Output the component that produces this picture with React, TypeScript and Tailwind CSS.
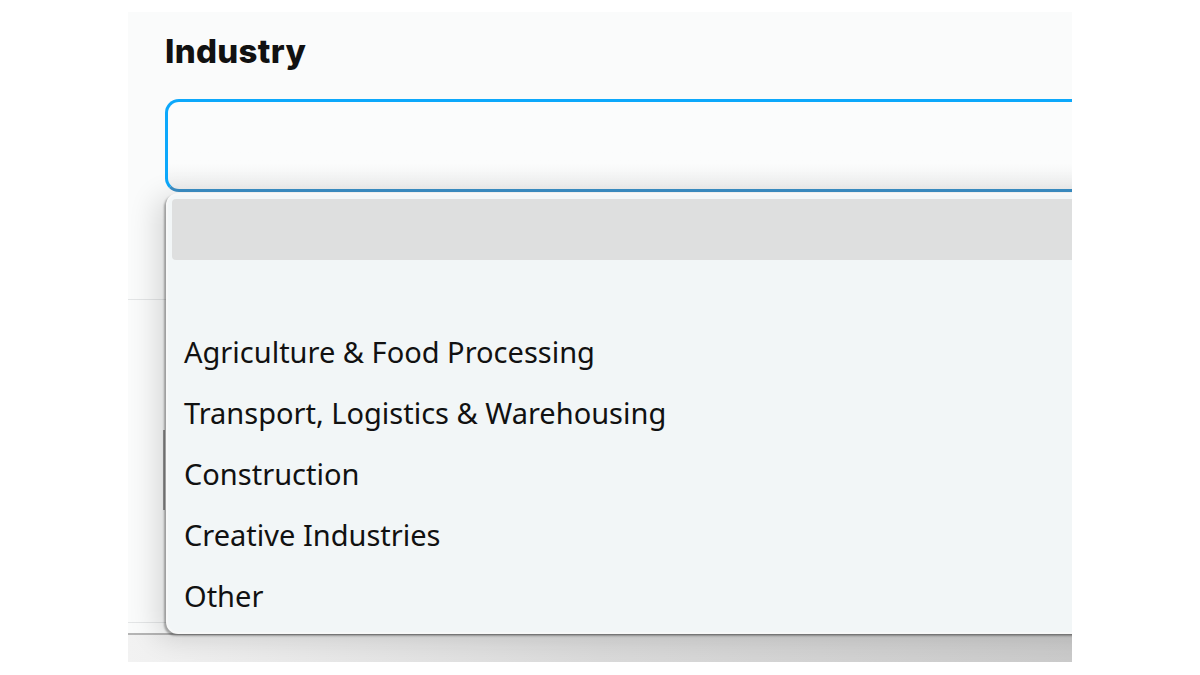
import React from 'react';

const options = [
  '',
  '',
  'Agriculture & Food Processing',
  'Transport, Logistics & Warehousing',
  'Construction',
  'Creative Industries',
  'Other',
];

const App: React.FC = () => {
  return (
    <div className="w-[1200px] h-[675px] bg-white overflow-hidden pt-[12px] pl-[128px]">
      <div className="relative w-[944px] h-[650px] bg-[#fafbfb] overflow-hidden flex flex-col">
        {/* form content behind the menu */}
        <div className="pl-[37px] pt-[16px] flex flex-col">
          <h2
            className="text-[33px] font-extrabold leading-[46px] text-[#111] tracking-[0.3px]"
            style={{ fontFamily: 'Inter, "Noto Sans", sans-serif' }}
          >
            Industry
          </h2>
          <div className="mt-[25px] h-[93px] w-[960px] rounded-[14px] border-[3px] border-[#0ca8fb] border-b-[#3a8fc6] bg-gradient-to-b from-[#fbfcfc] from-70% to-[#efefef]" />
        </div>
        <div className="mt-[107px] border-t border-[#e3e5e6] flex-1 flex flex-col">
          <div className="mt-[130px] ml-[35px] h-[80px] w-[2px] bg-[#9d9d9d]" />
          <div className="mt-auto border-t border-[#e3e5e6] h-[40px] flex flex-col justify-end">
            <div className="h-[29px] bg-gradient-to-r from-[#f2f2f2] via-[#dadada] to-[#cbcbcb] border-t-2 border-[#b5b5b5]" />
          </div>
        </div>

        {/* open select menu */}
        <div
          className="absolute left-[38px] top-[181px] w-[960px] h-[441px] rounded-[12px] border-2 border-[#f7f8f8] bg-[#f2f6f7] shadow-[-2px_2px_2px_rgba(0,0,0,0.3),-10px_4px_28px_rgba(0,0,0,0.14)] p-[4px] flex flex-col"
          style={{ fontFamily: '"Noto Sans", "Open Sans", sans-serif' }}
        >
          {options.map((opt, i) => (
            <div
              key={i}
              className={
                i === 0
                  ? 'h-[61px] shrink-0 rounded-[4px] bg-[#dedfdf]'
                  : 'h-[61px] shrink-0 flex items-center px-[12px] text-[29px] text-[#111]'
              }
            >
              {opt}
            </div>
          ))}
        </div>
      </div>
    </div>
  );
};

export default App;
